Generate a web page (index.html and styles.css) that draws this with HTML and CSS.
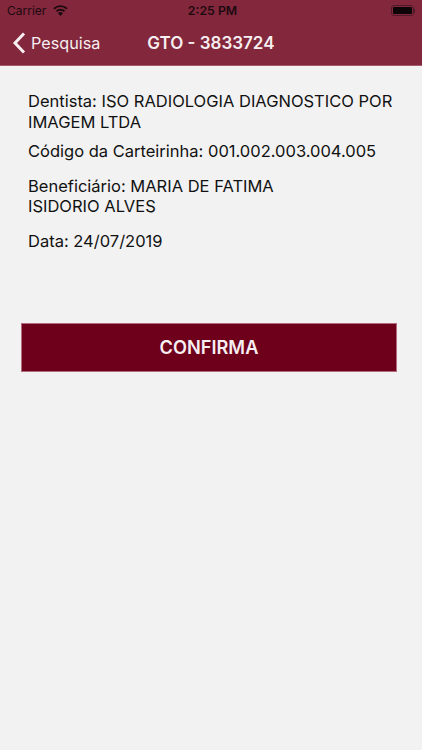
FILE: index.html
```html
<!DOCTYPE html>
<html lang="en">

<head>
    <meta charset="UTF-8">
    <meta name="viewport" content="width=device-width, initial-scale=1.0">
    <title>GTO</title>
    <link rel="stylesheet" href="styles.css">
</head>

<body>
    <div class="header">
        <div class="status-bar">
            <div class="status-left">
                <span>Carrier</span>
                <svg class="wifi" width="15" height="11" viewBox="0 0 15 11">
                    <path d="M7.5 11 L5 8.2 A3.6 3.6 0 0 1 10 8.2 Z" fill="#1c0a10"/>
                    <path d="M3.5 6.4 A5.8 5.8 0 0 1 11.5 6.4" fill="none" stroke="#1c0a10" stroke-width="1.9"/>
                    <path d="M1 3.7 A9.4 9.4 0 0 1 14 3.7" fill="none" stroke="#1c0a10" stroke-width="1.9"/>
                </svg>
            </div>
            <span class="status-time">2:25 PM</span>
            <div class="battery">
                <div class="battery-body"><div class="battery-fill"></div></div>
                <div class="battery-tip"></div>
            </div>
        </div>
        <div class="nav-bar">
            <div class="back">
                <svg width="14" height="22" viewBox="0 0 14 22">
                    <path d="M12 1.5 L3 11 L12 20.5" fill="none" stroke="#f6eef0" stroke-width="3"/>
                </svg>
                <span>Pesquisa</span>
            </div>
            <div class="nav-title">GTO - 3833724</div>
        </div>
    </div>

    <div class="content">
        <p class="line line-dentista">Dentista: ISO RADIOLOGIA DIAGNOSTICO POR IMAGEM LTDA</p>
        <p class="line line-codigo">Código da Carteirinha: 001.002.003.004.005</p>
        <p class="line line-benef">Beneficiário: MARIA DE FATIMA<br>ISIDORIO ALVES</p>
        <p class="line line-data">Data: 24/07/2019</p>
        <button class="confirm">CONFIRMA</button>
    </div>
</body>

</html>
```

FILE: styles.css
```css
html,
body {
    margin: 0;
    padding: 0;
}

body {
    width: 422px;
    height: 750px;
    overflow: hidden;
    background-color: #f2f2f2;
    font-family: Inter, "Liberation Sans", sans-serif;
    color: #111111;
}

.header {
    height: 66px;
    background-color: #83273c;
    box-sizing: border-box;
    border-bottom: 1px solid #a5596b;
}

.status-bar {
    display: flex;
    justify-content: space-between;
    align-items: center;
    height: 21px;
    padding: 0 7px 0 7px;
    font-size: 12px;
    color: #1c0a10;
    position: relative;
}

.status-left {
    display: flex;
    align-items: center;
    gap: 7px;
}

.status-time {
    position: absolute;
    left: 3px;
    right: 0;
    text-align: center;
    font-weight: 600;
    font-size: 12.3px;
}

.battery {
    display: flex;
    align-items: center;
}

.battery-body {
    width: 23px;
    height: 11px;
    box-sizing: border-box;
    border: 1px solid #4f1a28;
    border-radius: 3px;
    padding: 1px;
}

.battery-fill {
    height: 100%;
    background-color: #0c0406;
    border-radius: 1px;
}

.battery-tip {
    width: 1px;
    height: 4px;
    background-color: #4f1a28;
}

.nav-bar {
    display: flex;
    align-items: center;
    height: 44px;
    color: #f6eef0;
    position: relative;
}

.back {
    display: flex;
    align-items: center;
    gap: 5px;
    padding-left: 12px;
    font-size: 16.2px;
}

.nav-title {
    margin-left: 47px;
    font-size: 17px;
    font-weight: 600;
}

.content {
    display: flex;
    flex-direction: column;
    padding: 25px 22px 0 21px;
}

.line {
    margin: 0;
    padding-left: 7px;
    font-size: 16.5px;
    line-height: 21px;
}

.line-codigo {
    margin-top: 8px;
}

.line-benef {
    margin-top: 14px;
    line-height: 20px;
}

.line-data {
    margin-top: 15px;
}

.confirm {
    margin-top: 71px;
    height: 49px;
    width: 376px;
    background-color: #6e001c;
    border: 1px solid #b36a7d;
    color: #f6eef0;
    font-family: inherit;
    font-size: 18.2px;
    font-weight: 600;
    padding: 0 0 2px;
}
```
